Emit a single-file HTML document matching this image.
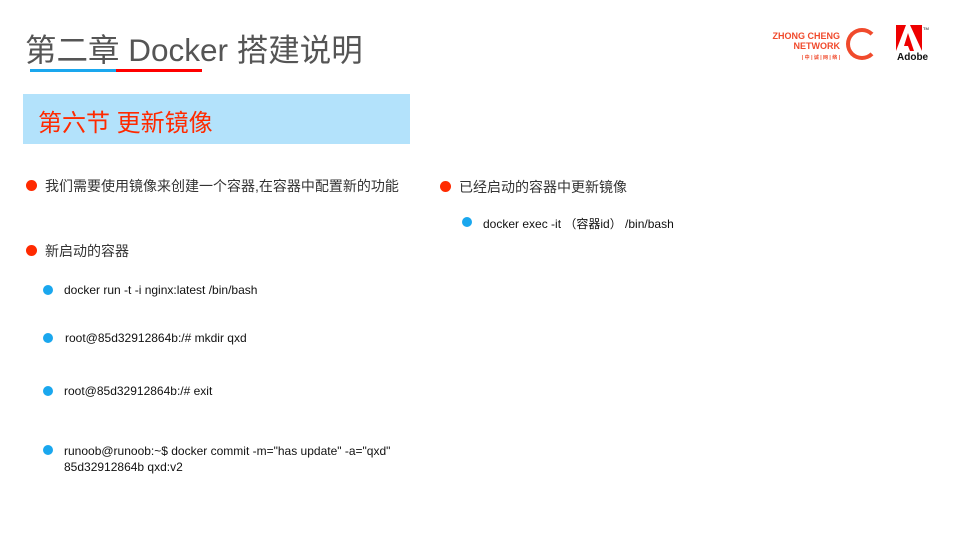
<!DOCTYPE html>
<html><head><meta charset="utf-8"><style>
body{margin:0;width:960px;height:540px;background:#fff;position:relative;overflow:hidden;font-family:"Liberation Sans","Noto Sans CJK SC",sans-serif}
.a{position:absolute;white-space:nowrap}
.dot{position:absolute;border-radius:50%}
.r{background:#ff2a00;width:11px;height:11px}
.b{background:#1aa7ee;width:10px;height:10px}
.t{font-size:14px;color:#333}
.s{font-size:12px;color:#111}
</style></head><body>
<div class="a" style="left:25px;top:25px;font-size:31.5px;color:#555">第二章 Docker 搭建说明</div>
<div class="a" style="left:30px;top:69px;width:86px;height:3px;background:#1aa7ee"></div>
<div class="a" style="left:116px;top:69px;width:86px;height:3px;background:#f00"></div>
<div class="a" style="left:23px;top:94px;width:387px;height:50px;background:#b3e2fb"></div>
<div class="a" style="left:38px;top:103px;font-size:24px;color:#ff2a00">第六节 更新镜像</div>
<div class="a" style="left:768px;top:31px;font-size:9px;font-weight:bold;color:#f04a2c;line-height:10px;text-align:right;width:72px">ZHONG CHENG<br>NETWORK<br><span style="font-size:5px">| 中 | 诚 | 网 | 络 |</span></div>
<div class="a" style="left:846px;top:28px;width:24px;height:24px;border:4px solid #f04a2c;border-radius:50%;border-right-color:transparent"></div>
<svg class="a" style="left:896px;top:25px" width="36" height="28"><polygon points="0,0 10,0 0,26" fill="#e00"/><polygon points="14,0 26,0 26,26" fill="#e00"/><polygon points="12,8 18,26 14,26 12,21 8,21" fill="#e00"/><text x="27" y="5" font-size="4">TM</text></svg>
<div class="a" style="left:897px;top:52px;font-size:10px;font-weight:bold;color:#111">Adobe</div>
<div class="dot r" style="left:26px;top:180px"></div><div class="a t" style="left:45px;top:176px">我们需要使用镜像来创建一个容器,在容器中配置新的功能</div>
<div class="dot r" style="left:26px;top:245px"></div><div class="a t" style="left:45px;top:241px">新启动的容器</div>
<div class="dot r" style="left:440px;top:181px"></div><div class="a t" style="left:459px;top:177px">已经启动的容器中更新镜像</div>
<div class="dot b" style="left:462px;top:217px"></div><div class="a s" style="left:483px;top:215px">docker exec -it （容器id） /bin/bash</div>
<div class="dot b" style="left:43px;top:285px"></div><div class="a s" style="left:64px;top:283px">docker run -t -i nginx:latest /bin/bash</div>
<div class="dot b" style="left:43px;top:333px"></div><div class="a s" style="left:65px;top:331px">root@85d32912864b:/# mkdir qxd</div>
<div class="dot b" style="left:43px;top:386px"></div><div class="a s" style="left:64px;top:384px">root@85d32912864b:/# exit</div>
<div class="dot b" style="left:43px;top:445px"></div><div class="a s" style="left:64px;top:443px;line-height:16px">runoob@runoob:~$ docker commit -m="has update" -a="qxd"<br>85d32912864b qxd:v2</div>
</body></html>
